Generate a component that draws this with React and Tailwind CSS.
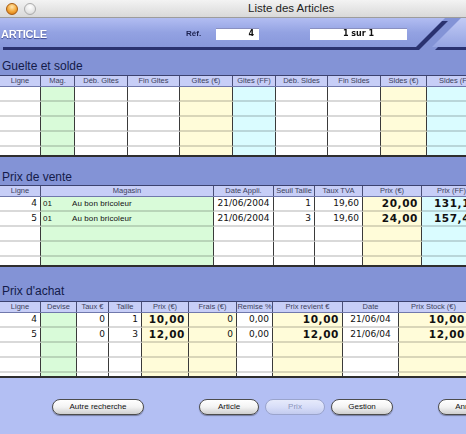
import React from 'react';

const BG = { w: 'bg-white', g: 'bg-[#d9fbd9]', y: 'bg-[#fffcd9]', c: 'bg-[#dafcff]' };

const GUELTE = [
  { h: 'Ligne', w: 'w-[41px]', bg: 'w' },
  { h: 'Mag.', w: 'w-[34px]', bg: 'g' },
  { h: 'Déb. Gltes', w: 'w-[53px]', bg: 'w' },
  { h: 'Fin Gltes', w: 'w-[52px]', bg: 'w' },
  { h: 'Gltes (€)', w: 'w-[53px]', bg: 'y' },
  { h: 'Gltes (FF)', w: 'w-[43px]', bg: 'c' },
  { h: 'Déb. Sldes', w: 'w-[52px]', bg: 'w' },
  { h: 'Fin Sldes', w: 'w-[53px]', bg: 'w' },
  { h: 'Sldes (€)', w: 'w-[46px]', bg: 'y' },
  { h: 'Sldes (FF)', w: 'w-[60px]', bg: 'c' },
];

const VENTE = [
  { h: 'Ligne', w: 'w-[41px]', bg: 'w', a: 'r' },
  { h: 'Magasin', w: 'w-[173px]', bg: 'g', a: 'mag' },
  { h: 'Date Appli.', w: 'w-[60px]', bg: 'w', a: 'c' },
  { h: 'Seuil Taille', w: 'w-[41px]', bg: 'w', a: 'r' },
  { h: 'Taux TVA', w: 'w-[48px]', bg: 'w', a: 'r' },
  { h: 'Prix (€)', w: 'w-[59px]', bg: 'y', a: 'r', b: true },
  { h: 'Prix (FF)', w: 'w-[60px]', bg: 'c', a: 'r', b: true },
];

const VENTE_ROWS = [
  ['4', ['01', 'Au bon bricoleur'], '21/06/2004', '1', '19,60', '20,00', '131,19'],
  ['5', ['01', 'Au bon bricoleur'], '21/06/2004', '3', '19,60', '24,00', '157,43'],
];

const ACHAT = [
  { h: 'Ligne', w: 'w-[41px]', bg: 'w', a: 'r' },
  { h: 'Devise', w: 'w-[36px]', bg: 'g', a: 'l' },
  { h: 'Taux €', w: 'w-[32px]', bg: 'w', a: 'r' },
  { h: 'Taille', w: 'w-[33px]', bg: 'w', a: 'r' },
  { h: 'Prix (€)', w: 'w-[47px]', bg: 'y', a: 'r', b: true },
  { h: 'Frais (€)', w: 'w-[48px]', bg: 'y', a: 'r' },
  { h: 'Remise %', w: 'w-[36px]', bg: 'w', a: 'r' },
  { h: 'Prix revient €', w: 'w-[70px]', bg: 'y', a: 'r', b: true },
  { h: 'Date', w: 'w-[56px]', bg: 'w', a: 'c' },
  { h: 'Prix Stock (€)', w: 'w-[70px]', bg: 'y', a: 'r', b: true },
];

const ACHAT_ROWS = [
  ['4', '', '0', '1', '10,00', '0', '0,00', '10,00', '21/06/04', '10,00'],
  ['5', '', '0', '3', '12,00', '0', '0,00', '12,00', '21/06/04', '12,00'],
];

const ALIGN = { r: 'justify-end pr-[3px]', l: 'justify-start pl-[3px]', c: 'justify-center', mag: 'justify-start pl-[2px]' };

function Cell({ col, v }) {
  let inner = null;
  if (col.a === 'mag' && Array.isArray(v)) {
    inner = (
      <span className="flex font-['Liberation_Sans',Arial,sans-serif] text-[8px]">
        <span className="w-[29px]">{v[0]}</span>
        <span className="tracking-[0.1px]">{v[1]}</span>
      </span>
    );
  } else if (v) {
    inner = col.b
      ? <span className="font-['DejaVu_Sans',Verdana,sans-serif] font-bold text-[10.5px] tracking-[0.6px]">{v}</span>
      : <span className="font-['DejaVu_Sans',Verdana,sans-serif] text-[9px]">{v}</span>;
  }
  return (
    <div className={`${col.w} ${BG[col.bg]} ${ALIGN[col.a || 'c']} shrink-0 h-full flex items-center border-r border-r-[#3a3a3a] border-b-2 border-b-black/15 text-[#111] whitespace-nowrap overflow-hidden`}>
      {inner}
    </div>
  );
}

function Table({ cols, rows = [], bodyH }) {
  const all = [...rows];
  while (all.length < 5) all.push(cols.map(() => ''));
  return (
    <div className="overflow-hidden">
      <div className="flex h-[12px] bg-[#c7cef7] border-t border-[#3c4270] border-b border-b-[#7078ac]">
        {cols.map((c) => (
          <div key={c.h} className={`${c.w} shrink-0 border-r border-[#4a4f78] flex items-center justify-center text-[7.5px] leading-none text-[#3c3f5c] whitespace-nowrap overflow-hidden`}>
            {c.h}
          </div>
        ))}
      </div>
      <div className={`${bodyH} overflow-hidden border-b-2 border-[#2e2e2e]`}>
        {all.map((r, i) => (
          <div key={i} className="flex h-[15px]">
            {cols.map((c, j) => <Cell key={j} col={c} v={r[j]} />)}
          </div>
        ))}
      </div>
    </div>
  );
}

function SectionTitle({ children, cls }) {
  return (
    <div className={`${cls} pl-[2px]`}>
      <div className="text-[12px] leading-[14px] text-[#141b4a]">{children}</div>
    </div>
  );
}

function Btn({ children, w, cls = '', disabled }) {
  const look = disabled
    ? 'border-[#9aa4cc] from-[#e6eafb] via-[#d8def8] to-[#c3cbef] text-[#8c95bc]'
    : 'border-[#4c4c4c] from-white via-[#f3f3f3] to-[#cfcfcf] text-[#111] shadow-[0_1px_1px_rgba(0,0,0,0.35)]';
  return (
    <div className={`${w} ${cls} ${look} shrink-0 h-[16px] rounded-full border bg-gradient-to-b flex items-center justify-center text-[8px]`}>
      {children}
    </div>
  );
}

export default function App() {
  return (
    <div className="w-[466px] h-[434px] overflow-hidden flex flex-col bg-[#8393d6] font-['Liberation_Sans',Arial,sans-serif]">
      {/* title bar */}
      <div className="h-[18px] shrink-0 flex items-center bg-gradient-to-b from-[#f3f3f3] to-[#d9d9d9] border-b border-[#9c9c9c]">
        <div className="ml-[6px] w-[12px] h-[12px] rounded-full border border-[#a65a10] bg-[radial-gradient(circle_at_50%_30%,#ffe6b0,#f3a636_55%,#cf6d0e)]" />
        <div className="ml-[6px] w-[12px] h-[12px] rounded-full border border-[#ababab] bg-[radial-gradient(circle_at_50%_30%,#ffffff,#e6e6e6_60%,#cdcdcd)]" />
        <div className="ml-[212px] text-[11.5px] text-[#222]">Liste des Articles</div>
      </div>

      {/* header band */}
      <div className="h-[32px] shrink-0 bg-[#8393d6]">
        <div className="relative h-[29px] [filter:drop-shadow(3px_3px_0px_#2a3270)]">
          <div className="h-full [clip-path:polygon(0_0,445px_0,416px_100%,0_100%)] bg-gradient-to-b from-[#b2bdf2] via-[#93a2e2] to-[#8797db] flex items-center pt-[3px]">
            <span className="w-[186px] pl-[1px] text-white font-bold text-[11px] tracking-tight [text-shadow:0_1px_1px_#3a4690]">ARTICLE</span>
            <span className="w-[30px] font-bold text-[8px] text-[#1c2250]">Réf.</span>
            <div className="w-[43px] h-[12px] bg-white shadow-[inset_0_1px_0_#8a90c0] flex items-center justify-end pr-[5px] font-['DejaVu_Sans',Verdana,sans-serif] font-bold text-[8px] text-[#111]">4</div>
            <div className="ml-[51px] w-[97px] h-[12px] bg-white shadow-[inset_0_1px_0_#8a90c0] flex items-center justify-center font-['DejaVu_Sans',Verdana,sans-serif] font-bold text-[8px] text-[#111]">1 sur 1</div>
          </div>
          <div className="absolute top-0 left-[430px] w-[40px] h-full [clip-path:polygon(31px_0,100%_0,100%_100%,2px_100%)] bg-gradient-to-b from-[#c2cbf5] to-[#95a4e2]" />
        </div>
      </div>

      {/* sections */}
      <div className="flex flex-col">
        <SectionTitle cls="h-[25px] pt-[9px]">Guelte et solde</SectionTitle>
        <Table cols={GUELTE} bodyH="h-[70px]" />
        <SectionTitle cls="h-[28px] pt-[13px]">Prix de vente</SectionTitle>
        <Table cols={VENTE} rows={VENTE_ROWS} bodyH="h-[70px]" />
        <SectionTitle cls="h-[34px] pt-[17px]">Prix d'achat</SectionTitle>
        <Table cols={ACHAT} rows={ACHAT_ROWS} bodyH="h-[65px]" />
      </div>

      {/* buttons */}
      <div className="h-[56px] shrink-0 bg-[#b3bff3] flex items-start pt-[21px] pl-[52px]">
        <Btn w="w-[92px]">Autre recherche</Btn>
        <Btn w="w-[60px]" cls="ml-[55px]">Article</Btn>
        <Btn w="w-[60px]" cls="ml-[6px]" disabled>Prix</Btn>
        <Btn w="w-[62px]" cls="ml-[6px]">Gestion</Btn>
        <Btn w="w-[62px]" cls="ml-[45px]">Annuler</Btn>
      </div>
    </div>
  );
}
